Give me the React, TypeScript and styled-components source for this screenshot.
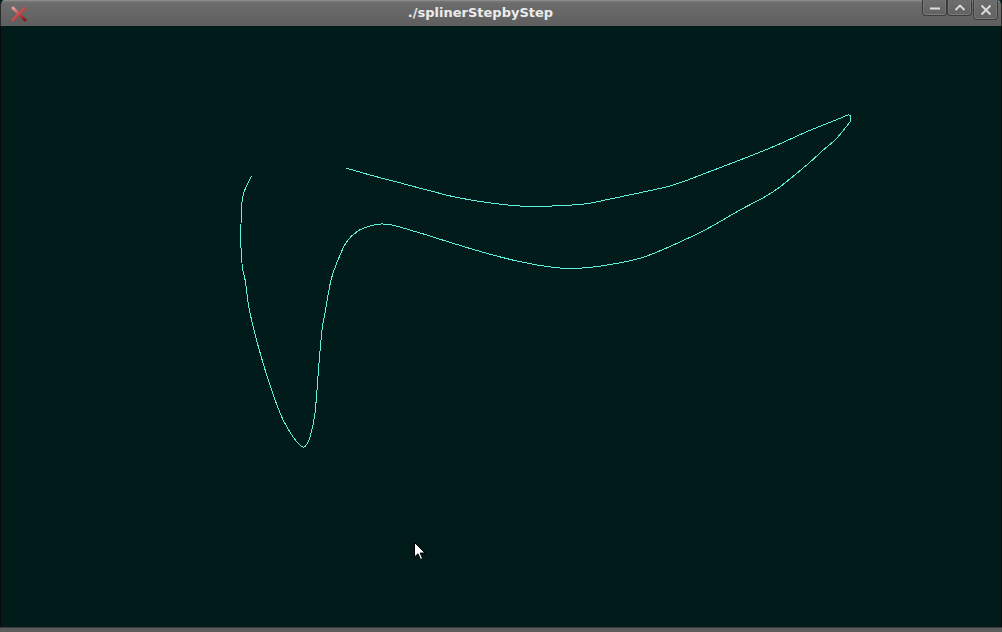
import React from 'react';
import styled, { createGlobalStyle } from 'styled-components';

const GlobalStyle = createGlobalStyle`
  html, body {
    margin: 0;
    padding: 0;
    background: #011b1b;
    overflow: hidden;
  }
`;

// spline samples, window coordinates
const points: [number, number][] = [
  [251.5, 176], [246, 187], [243, 196], [241.5, 207], [241, 225], [241, 248],
  [242.5, 268], [245.5, 282], [250, 313], [263, 363], [280, 413], [290, 432],
  [296, 441], [301, 446], [304, 447], [307, 444], [310, 437], [315, 413],
  [319, 363], [322, 330], [325, 313], [331, 280], [338, 260], [346.5, 242],
  [358, 231], [370, 226], [381, 224], [392, 225], [410, 230], [430, 236],
  [453, 243.3], [486.7, 253.3], [520, 261.7], [553, 267.3], [575, 268.5],
  [603, 265.7], [640, 258.3], [673.3, 245], [706.7, 229], [740, 210],
  [773.3, 191.7], [806.7, 165], [823.3, 150], [835, 140], [845, 128.3],
  [850, 121.7], [850.7, 116.5], [848.3, 115], [840, 118.3], [823.3, 125],
  [806.7, 131.7], [773.3, 146.7], [740, 160], [706.7, 172.7], [673.3, 185],
  [640, 192.7], [610, 199], [586.7, 203.7], [563, 205.5], [540, 206.3],
  [520, 206], [486.7, 202.5], [455, 197], [425, 189.5], [395, 181.5],
  [370, 175], [346, 168],
];

function splinePath(pts: [number, number][]) {
  let d = `M${pts[0][0]},${pts[0][1]}`;
  for (let i = 0; i < pts.length - 1; i++) {
    const p0 = pts[i - 1] || pts[i];
    const p1 = pts[i];
    const p2 = pts[i + 1];
    const p3 = pts[i + 2] || p2;
    const c1x = p1[0] + (p2[0] - p0[0]) / 6;
    const c1y = p1[1] + (p2[1] - p0[1]) / 6;
    const c2x = p2[0] - (p3[0] - p1[0]) / 6;
    const c2y = p2[1] - (p3[1] - p1[1]) / 6;
    d += ` C${c1x.toFixed(2)},${c1y.toFixed(2)} ${c2x.toFixed(2)},${c2y.toFixed(2)} ${p2[0]},${p2[1]}`;
  }
  return d;
}

export default function App() {
  return (
    <Window>
      <GlobalStyle />
      <TitleBar>
        <CloseIcon>
          <svg width="18" height="16" viewBox="0 0 18 16">
            <defs>
              <linearGradient id="xg" x1="0" y1="0" x2="1" y2="1">
                <stop offset="0" stopColor="#e7a0a0" />
                <stop offset="0.5" stopColor="#c04a4a" />
                <stop offset="1" stopColor="#8a1414" />
              </linearGradient>
            </defs>
            <path d="M3 2 L15 14 M15 2 L3 14" stroke="url(#xg)" strokeWidth="3" strokeLinecap="round" />
          </svg>
        </CloseIcon>
        <Title>./splinerStepbyStep</Title>
        <Buttons>
          <WinButton>
            <svg width="12" height="12" viewBox="0 0 12 12">
              <path d="M1 6.5 H11" stroke="#dedede" strokeWidth="2" />
            </svg>
          </WinButton>
          <WinButton>
            <svg width="12" height="12" viewBox="0 0 12 12">
              <path d="M1.5 8 L6 3.5 L10.5 8" stroke="#dedede" strokeWidth="1.8" fill="none" />
            </svg>
          </WinButton>
          <WinButton $tall>
            <svg width="12" height="12" viewBox="0 0 12 12">
              <path d="M1.5 1.5 L10.5 10.5 M10.5 1.5 L1.5 10.5" stroke="#dedede" strokeWidth="1.8" />
            </svg>
          </WinButton>
        </Buttons>
      </TitleBar>
      <Canvas>
        <svg width="1000" height="601" viewBox="1 26 1000 601" shapeRendering="crispEdges">
          <path d={splinePath(points)} stroke="#5ff3de" strokeWidth="1" fill="none" />
        </svg>
        <Pointer>
          <svg width="12" height="19" viewBox="0 0 12 19">
            <path d="M0.5 0.5 L0.5 15 L4 11.8 L6.5 17.5 L8.6 16.6 L6.2 11 L11 11 Z" fill="#fff" stroke="#000" strokeWidth="1" />
          </svg>
        </Pointer>
      </Canvas>
      <BottomBar />
    </Window>
  );
}

const Window = styled.div`
  width: 1002px;
  height: 632px;
  display: flex;
  flex-direction: column;
  background: #011b1b;
  box-sizing: border-box;
`;

const TitleBar = styled.div`
  height: 26px;
  flex: none;
  display: flex;
  align-items: flex-start;
  background: linear-gradient(#7a7a7a 0px, #6c6c6c 2px, #5e5e5e 26px);
  border-top: 1px solid #8a8a8a;
  border-left: 1px solid #2a2a2a;
  border-right: 1px solid #2a2a2a;
  border-radius: 5px 5px 0 0;
  box-sizing: border-box;
`;

const CloseIcon = styled.div`
  width: 34px;
  height: 25px;
  display: flex;
  align-items: center;
  justify-content: center;
  padding-left: 1px;
  box-sizing: border-box;
`;

const Title = styled.div`
  flex: 1;
  text-align: center;
  font-family: 'DejaVu Sans', sans-serif;
  font-weight: bold;
  font-size: 13px;
  line-height: 24px;
  color: #ececec;
  padding-left: 4px;
`;

const Buttons = styled.div`
  display: flex;
  align-items: flex-start;
  margin-top: -1px;
  padding-right: 3px;
`;

const WinButton = styled.div<{ $tall?: boolean }>`
  width: 25px;
  height: ${(p) => (p.$tall ? '20px' : '16px')};
  margin-left: ${(p) => (p.$tall ? '1px' : '0')};
  display: flex;
  align-items: center;
  justify-content: center;
  box-sizing: border-box;
  border: 1px solid #3c3c3c;
  border-top: none;
  border-radius: 0 0 4px 4px;
  background: linear-gradient(#6e6e6e, #626262);
  box-shadow: inset 0 -1px 0 #7c7c7c, inset 1px 0 0 #757575, inset -1px 0 0 #757575;
`;

const Canvas = styled.div`
  flex: 1;
  position: relative;
  background: #011b1b;
  border-left: 1px solid #0a0a0a;
  border-right: 1px solid #0a0a0a;
  overflow: hidden;

  svg {
    display: block;
  }
`;

const Pointer = styled.div`
  position: absolute;
  left: 413px;
  top: 516px;
`;

const BottomBar = styled.div`
  height: 5px;
  flex: none;
  background: #5c5c5c;
  border-top: 1px solid #3a3a3a;
  box-sizing: border-box;
`;
